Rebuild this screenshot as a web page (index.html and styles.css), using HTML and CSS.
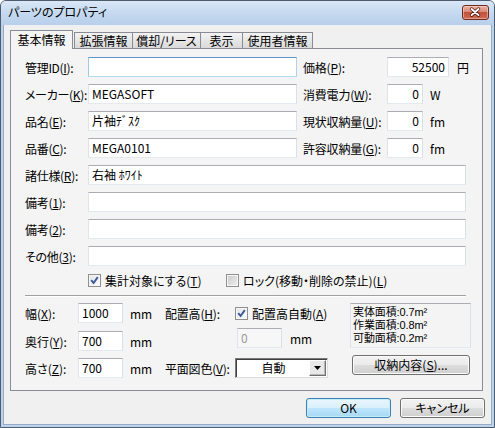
FILE: index.html
```html
<!DOCTYPE html>
<html lang="ja">
<head>
<meta charset="utf-8">
<title>パーツのプロパティ</title>
<link rel="stylesheet" href="styles.css">
</head>
<body>
<div class="window">
  <div class="titlebar">
    <span class="title">パーツのプロパティ</span>
    <span class="close">
      <svg viewBox="0 0 27 15" width="25" height="13">
        <path d="M9 3.5 L17 10.5 M17 3.5 L9 10.5" stroke="#5a2218" stroke-width="4" stroke-linecap="round" fill="none"/>
        <path d="M9 3.5 L17 10.5 M17 3.5 L9 10.5" stroke="#ffffff" stroke-width="2.2" stroke-linecap="round" fill="none"/>
      </svg>
    </span>
  </div>
  <div class="client">
    <div class="tabs">
      <div class="tab sel w63">基本情報</div>
      <div class="tab w59">拡張情報</div>
      <div class="tab w69 ov">償却/リース</div>
      <div class="tab w43 ov">表示</div>
      <div class="tab w71 ov">使用者情報</div>
    </div>
    <div class="panel">
      <div class="row">
        <span class="lbl">管理ID(<u>I</u>):</span>
        <span class="inp w209 focus"></span>
        <span class="lbl2">価格(<u>P</u>):</span>
        <span class="inp num w62">52500</span>
        <span class="unit u8">円</span>
      </div>
      <div class="row">
        <span class="lbl">メーカー(<u>K</u>):</span>
        <span class="inp w209">MEGASOFT</span>
        <span class="lbl2">消費電力(<u>W</u>):</span>
        <span class="inp num w36">0</span>
        <span class="unit u7">W</span>
      </div>
      <div class="row">
        <span class="lbl">品名(<u>E</u>):</span>
        <span class="inp w209">片袖ﾃﾞｽｸ</span>
        <span class="lbl2">現状収納量(<u>U</u>):</span>
        <span class="inp num w36">0</span>
        <span class="unit u7">fm</span>
      </div>
      <div class="row">
        <span class="lbl">品番(<u>C</u>):</span>
        <span class="inp w209">MEGA0101</span>
        <span class="lbl2">許容収納量(<u>G</u>):</span>
        <span class="inp num w36">0</span>
        <span class="unit u7">fm</span>
      </div>
      <div class="row">
        <span class="lbl">諸仕様(<u>R</u>):</span>
        <span class="inp wide">右袖 ﾎﾜｲﾄ</span>
      </div>
      <div class="row">
        <span class="lbl">備考(<u>1</u>):</span>
        <span class="inp wide"></span>
      </div>
      <div class="row">
        <span class="lbl">備考(<u>2</u>):</span>
        <span class="inp wide"></span>
      </div>
      <div class="row">
        <span class="lbl">その他(<u>3</u>):</span>
        <span class="inp wide"></span>
      </div>
      <div class="checks">
        <span class="check first">
          <span class="cb"><svg viewBox="0 0 13 13" width="13" height="13"><path d="M3.2 6.2 L5.6 9 L9.8 3.2" fill="none" stroke="#3f5b9a" stroke-width="2"/></svg></span>
          <span class="ctext">集計対象にする(<u>T</u>)</span>
        </span>
        <span class="check">
          <span class="cb off"></span>
          <span class="ctext">ロック(移動・削除の禁止)(<u>L</u>)</span>
        </span>
      </div>
      <div class="sep"></div>
      <div class="bottom">
        <div class="colA">
          <div class="brow r1">
            <span class="blbl">幅(<u>X</u>):</span>
            <span class="inp w45">1000</span>
            <span class="mm">mm</span>
          </div>
          <div class="brow r2">
            <span class="blbl">奥行(<u>Y</u>):</span>
            <span class="inp w45">700</span>
            <span class="mm">mm</span>
          </div>
          <div class="brow">
            <span class="blbl">高さ(<u>Z</u>):</span>
            <span class="inp w45">700</span>
            <span class="mm">mm</span>
          </div>
        </div>
        <div class="colB">
          <div class="brow b1">
            <span class="clbl">配置高(<u>H</u>):</span>
            <span class="cb"><svg viewBox="0 0 13 13" width="13" height="13"><path d="M3.2 6.2 L5.6 9 L9.8 3.2" fill="none" stroke="#3f5b9a" stroke-width="2"/></svg></span>
            <span class="ctext">配置高自動(<u>A</u>)</span>
          </div>
          <div class="brow b2">
            <span class="inp w45 dis">0</span>
            <span class="mm m8">mm</span>
          </div>
          <div class="brow">
            <span class="clbl">平面図色(<u>V</u>):</span>
            <span class="select">
              <span class="stext">自動</span>
              <span class="sbtn"><svg viewBox="0 0 7 4" width="7" height="4"><path d="M0 0 H7 L3.5 4 Z" fill="#000"/></svg></span>
            </span>
          </div>
        </div>
        <div class="colC">
          <div class="info">
            <div class="iline">実体面積:0.7m²</div>
            <div class="iline">作業面積:0.8m²</div>
            <div class="iline">可動面積:0.2m²</div>
          </div>
          <span class="btn store">収納内容(<u>S</u>)...</span>
        </div>
      </div>
    </div>
    <div class="footer">
      <span class="btn def">OK</span>
      <span class="btn">キャンセル</span>
    </div>
  </div>
</div>
</body>
</html>
```

FILE: styles.css
```css
* { box-sizing: border-box; }
html, body { margin: 0; padding: 0; }
body {
  width: 495px;
  height: 428px;
  overflow: hidden;
  background: #ffffff;
  font-family: "Noto Sans CJK JP", "Liberation Sans", sans-serif;
  font-size: 12px;
  color: #000;
  font-feature-settings: "palt";
}
u { text-decoration: underline; text-underline-offset: 1px; }

.window {
  width: 495px;
  height: 428px;
  border: 1px solid #4e5c70;
  border-radius: 6px 6px 0 0;
  background: #bcd3ec;
  display: flex;
  flex-direction: column;
  overflow: hidden;
}
.titlebar {
  height: 24px;
  flex: none;
  display: flex;
  align-items: flex-start;
  background: linear-gradient(#dae8f7, #c6daf0 45%, #b8cfeb);
}
.title {
  margin: 3px 0 0 7px;
  line-height: 16px;
  font-size: 12px;
}
.close {
  margin: 4px 5px 0 auto;
  width: 27px;
  height: 15px;
  border: 1px solid #6e2b20;
  border-radius: 3px;
  background: linear-gradient(#eab2a6, #d98a78 45%, #c4533b 50%, #cd6a50 100%);
  box-shadow: inset 0 0 0 1px rgba(255,230,220,0.45);
  display: flex;
  align-items: center;
  justify-content: center;
}

.client {
  flex: 1;
  margin: 0 2px 2px;
  border: 1px solid #97abc4;
  border-top: none;
  background: #f0f0f0;
  display: flex;
  flex-direction: column;
}

.tabs {
  margin: 5px 0 -1px 6px;
  height: 19px;
  display: flex;
  align-items: flex-end;
  position: relative;
  z-index: 1;
}
.tab {
  height: 16px;
  margin-bottom: 1px;
  border: 1px solid #898c95;
  border-bottom: none;
  background: linear-gradient(#f3f3f3, #e6e6e6 50%, #d9d9d9);
  text-align: center;
  line-height: 15px;
  white-space: nowrap;
}
.tab.ov { margin-left: -1px; }
.tab.sel {
  height: 19px;
  margin-bottom: 0;
  background: #f4f4f4;
  line-height: 18px;
  margin-right: 1px;
}
.w63 { width: 63px; }
.w59 { width: 59px; }
.w69 { width: 69px; }
.w43 { width: 43px; }
.w71 { width: 71px; }

.panel {
  margin-left: 6px;
  width: 473px;
  height: 343px;
  border: 1px solid #898c95;
  background: #f4f4f4;
  padding: 8px 0 0 14px;
}
.row {
  display: flex;
  align-items: center;
  height: 20px;
  margin-bottom: 7px;
}
.lbl { width: 63px; white-space: nowrap; flex: none; letter-spacing: -0.3px; }
.lbl2 { width: 84px; margin-left: 6px; white-space: nowrap; flex: none; letter-spacing: -0.2px; }

.inp {
  height: 20px;
  flex: none;
  background: #ffffff;
  border: 1px solid;
  border-color: #abadb3 #dbdfe6 #e3e9ef #e2e3ea;
  padding: 0 3px;
  line-height: 18px;
  white-space: nowrap;
  overflow: hidden;
}
.inp.focus { border-color: #5e93c4 #b5cfe7 #b7d9ed #a4c9e3; }
.inp.num { text-align: right; }
.inp.dis { color: #9a9a9a; background: #f7f7f7; }
.w209 { width: 209px; }
.w62 { width: 62px; }
.w36 { width: 36px; }
.w45 { width: 45px; }
.wide { width: 378px; }
.unit { white-space: nowrap; }
.u8 { margin-left: 8px; }
.u7 { margin-left: 7px; }

.checks {
  display: flex;
  align-items: center;
  height: 15px;
  padding-left: 63px;
}
.check { display: flex; align-items: center; }
.check.first { width: 138px; }
.cb {
  width: 13px;
  height: 13px;
  flex: none;
  border: 1px solid #8f8f8f;
  background: linear-gradient(135deg, #e2e4e8, #fdfdfd);
  box-shadow: inset 0 0 0 1px #f6f6f6;
  position: relative;
}
.cb svg { position: absolute; left: -1px; top: -1px; }
.cb.off { background: linear-gradient(135deg, #c8cacd, #eeeeee); }
.ctext { margin-left: 4px; white-space: nowrap; }

.sep {
  margin-top: 7px;
  width: 441px;
  height: 2px;
  border-top: 1px solid #a0a0a0;
  border-bottom: 1px solid #ffffff;
}

.bottom {
  margin-top: 6px;
  display: flex;
}
.colA { width: 140px; flex: none; }
.colB { width: 185px; flex: none; }
.colC { width: 121px; flex: none; display: flex; flex-direction: column; }
.brow {
  display: flex;
  align-items: center;
  height: 20px;
}
.r1 { margin-bottom: 8px; }
.r2 { margin-bottom: 7px; }
.b1 { margin-bottom: 5px; }
.b2 { margin-bottom: 10px; padding-left: 72px; }
.blbl { width: 53px; white-space: nowrap; flex: none; }
.mm { margin-left: 7px; }
.mm.m8 { margin-left: 8px; }
.clbl { width: 70px; white-space: nowrap; flex: none; letter-spacing: -0.2px; }

.select {
  width: 93px;
  height: 20px;
  flex: none;
  display: flex;
  align-items: center;
  background: #ffffff;
  border: 1px solid;
  border-color: #7a7a7a #dcdcdc #dcdcdc #7a7a7a;
  box-shadow: inset 1px 1px 0 #404040;
  padding: 1px 1px 1px 2px;
}
.stext { flex: 1; text-align: center; line-height: 16px; }
.sbtn {
  width: 17px;
  height: 16px;
  flex: none;
  background: #e8e8e8;
  border: 1px solid;
  border-color: #ffffff #6f6f6f #6f6f6f #ffffff;
  box-shadow: inset -1px -1px 0 #b8b8b8;
  display: flex;
  align-items: center;
  justify-content: center;
}

.info {
  width: 121px;
  height: 45px;
  border: 1px solid;
  border-color: #abadb3 #dbdfe6 #e3e9ef #e2e3ea;
  background: #f4f4f4;
  padding: 2px 0 0 2px;
  font-family: "Liberation Sans", "Noto Sans CJK JP", sans-serif;
  font-size: 11px;
  letter-spacing: -0.1px;
}
.iline {
  height: 13px;
  line-height: 13px;
  white-space: nowrap;
}

.btn {
  height: 20px;
  border: 1px solid #707070;
  border-radius: 3px;
  background: linear-gradient(#f2f2f2, #ebebeb 50%, #dddddd 50%, #cfcfcf);
  box-shadow: inset 0 0 0 1px #fbfbfb;
  display: flex;
  align-items: center;
  justify-content: center;
  line-height: 18px;
  white-space: nowrap;
}
.btn.store {
  margin-top: 7px;
  margin-left: 2px;
  width: 118px;
}
.footer {
  margin-top: 7px;
  padding-right: 6px;
  display: flex;
  justify-content: flex-end;
  gap: 9px;
}
.footer .btn { width: 85px; }
.btn.def {
  border-color: #3c7fb1;
  background: linear-gradient(#eaf6fd, #d9f0fc 50%, #bee6fd 50%, #a7d9f5);
  box-shadow: inset 0 0 0 1px #c3ecfd;
}
```
